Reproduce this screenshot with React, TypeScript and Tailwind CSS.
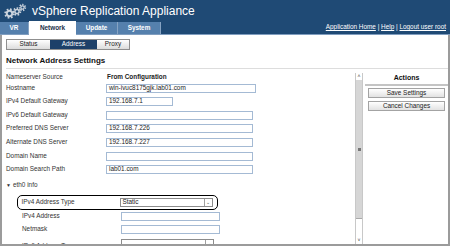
import React from "react";

const BLUE = "bg-[#1f4a75]";

function Gear({ cx, cy, r }: { cx: number; cy: number; r: number }) {
  const c = 2 * Math.PI * r;
  const teeth = r > 4 ? 8 : 7;
  const seg = c / teeth / 2;
  return (
    <g>
      <circle
        cx={cx}
        cy={cy}
        r={r}
        fill="none"
        stroke="#c9d2dc"
        strokeWidth={1.8}
        strokeDasharray={`${seg} ${seg}`}
      />
      <circle cx={cx} cy={cy} r={r - 0.6} fill="#c9d2dc" />
      <circle cx={cx} cy={cy} r={r * 0.38} fill="#1f4a75" />
    </g>
  );
}

function Logo() {
  return (
    <svg width="24" height="16" viewBox="0 0 24 16" className="shrink-0">
      <Gear cx={6.5} cy={10.5} r={4.3} />
      <Gear cx={14} cy={8.5} r={3.4} />
      <Gear cx={19.5} cy={4.5} r={2.8} />
    </svg>
  );
}

function Input({ w, value }: { w: number; value?: string }) {
  return (
    <div
      className="h-[9px] border border-[#a4bad4] bg-white px-[2px] flex items-center text-[6.4px] text-[#222] leading-none"
      style={{ width: w }}
    >
      {value}
    </div>
  );
}

function Select({ value }: { value: string }) {
  return (
    <div className="h-[9px] w-[93px] border border-[#8c8c8c] bg-white flex items-center text-[6.4px] text-[#222] leading-none">
      <span className="flex-1 px-[2px]">{value}</span>
      <span className="w-[8px] h-full border-l border-[#a0a0a0] flex items-center justify-center text-[5px] text-[#444]">
        ⌄
      </span>
    </div>
  );
}

const rows = [
  { label: "Hostname", w: 150, value: "win-ivuc8175gjk.lab01.com", mt: "mt-[2px]" },
  { label: "IPv4 Default Gateway", w: 67, value: "192.168.7.1", mt: "mt-[4px]" },
  { label: "IPv6 Default Gateway", w: 147, value: "", mt: "mt-[5px]" },
  { label: "Preferred DNS Server", w: 147, value: "192.168.7.226", mt: "mt-[4px]" },
  { label: "Alternate DNS Server", w: 147, value: "192.168.7.227", mt: "mt-[5px]" },
  { label: "Domain Name", w: 147, value: "", mt: "mt-[5px]" },
  { label: "Domain Search Path", w: 147, value: "lab01.com", mt: "mt-[4px]" },
];

export default function App() {
  return (
    <div className="w-[450px] h-[246px] overflow-hidden bg-white flex flex-col font-['Liberation_Sans',Arial,sans-serif]">
      {/* Header */}
      <div className={`h-[21px] ${BLUE} flex items-center pl-[3px] pt-[1px]`}>
        <Logo />
        <span className="ml-[5px] text-white text-[12px] leading-none">
          vSphere Replication Appliance
        </span>
      </div>

      {/* Main tabs */}
      <div className={`h-[14px] ${BLUE} flex items-end border-b border-[#7f9dbf]`}>
        <div className="h-[12px] w-[29px] bg-[#5580ad] border-r border-[#86a3c3] flex items-center justify-center text-white text-[6.4px] font-bold">
          VR
        </div>
        <div className="h-[14px] w-[47px] -mb-px bg-white flex items-center justify-center text-[#1b2f48] text-[6.4px] font-bold">
          Network
        </div>
        <div className="h-[12px] w-[42px] bg-[#5580ad] border-r border-[#86a3c3] flex items-center justify-center text-white text-[6.4px] font-bold">
          Update
        </div>
        <div className="h-[12px] w-[43px] bg-[#5580ad] border-r border-[#86a3c3] flex items-center justify-center text-white text-[6.4px] font-bold">
          System
        </div>
        <div className="ml-auto mr-[4px] self-center text-white text-[6.4px] leading-none">
          <span className="underline">Application Home</span> |{" "}
          <span className="underline">Help</span> |{" "}
          <span className="underline">Logout user root</span>
        </div>
      </div>

      {/* Body */}
      <div className="flex-1 min-h-0 border-x-2 border-b-2 border-[#9b9b9b] flex flex-col overflow-hidden">
        {/* Sub tabs */}
        <div className="mt-[4px] ml-[4px] flex h-[11px] w-[124px] border border-[#8f8f8f] text-[6.4px] leading-none">
          <div className="w-[43px] bg-gradient-to-b from-white to-[#dcdcdc] flex items-center justify-center text-[#222]">
            Status
          </div>
          <div className="w-[47px] bg-[#1d4069] flex items-center justify-center text-white">
            Address
          </div>
          <div className="flex-1 bg-gradient-to-b from-white to-[#dcdcdc] flex items-center justify-center text-[#222]">
            Proxy
          </div>
        </div>

        <h1 className="mt-[6px] ml-[4px] text-[8px] font-bold text-[#111] leading-[9px]">
          Network Address Settings
        </h1>
        <div className="mt-[3px] ml-[4px] border-t border-[#dddddd]" />

        <div className="flex flex-1 min-h-0">
          {/* Form */}
          <div className="flex-1 pl-[4px] text-[6.4px] text-[#333] leading-none">
            <div className="mt-[4px] h-[9px] flex items-center">
              <span className="w-[100px]">Nameserver Source</span>
              <span className="font-bold text-[#222] pl-[1px]">From Configuration</span>
            </div>
            {rows.map((r) => (
              <div key={r.label} className={`${r.mt} h-[9px] flex items-center`}>
                <span className="w-[100px]">{r.label}</span>
                <Input w={r.w} value={r.value} />
              </div>
            ))}

            <div className="mt-[7px] h-[9px] flex items-center text-[#333]">
              <span className="text-[5px] mr-[2px]">▼</span>
              <span>eth0 info</span>
            </div>

            <div className="ml-[11px] w-[201px] mt-[5px] h-[15px] border-[1.5px] border-black rounded-[5px] flex items-center pl-[3.5px]">
              <span className="w-[98px]">IPv4 Address Type</span>
              <Select value="Static" />
            </div>

            <div className="ml-[16px] mt-[2px] h-[9px] flex items-center">
              <span className="w-[99px]">IPv4 Address</span>
              <Input w={99} />
            </div>
            <div className="ml-[16px] mt-[4px] h-[9px] flex items-center">
              <span className="w-[99px]">Netmask</span>
              <Input w={99} />
            </div>
            <div className="ml-[16px] mt-[5px] h-[9px] flex items-start">
              <span className="w-[99px] pt-[4px]">IPv6 Address Type</span>
              <Select value="" />
            </div>
          </div>

          {/* Scrollbar */}
          <div className="w-[8px] mt-[4px] border-x border-[#c8c8c8] flex flex-col">
            <div className="h-[7px] flex items-center justify-center text-[5px] text-[#333] leading-none">
              ˄
            </div>
            <div className="h-[139px] bg-[#d6d6d6] border-b border-[#a9a9a9] flex items-center justify-center">
              <div className="w-[3px] h-[3px] bg-[#777]" />
            </div>
            <div className="flex-1 bg-white" />
            <div className="h-[6px] flex items-start justify-center text-[5px] text-[#333] leading-none">
              ˅
            </div>
          </div>

          {/* Actions */}
          <div className="w-[83px] ml-[2px] flex flex-col">
            <div className="mt-[5px] h-[8px] text-center text-[7px] font-bold text-[#111] leading-[8px]">
              Actions
            </div>
            <div className="mt-[2px] border-t-2 border-[#c4c4c4]" />
            <div className="mt-[2px] mx-[3px] h-[10px] border border-[#a3a3a3] bg-gradient-to-b from-white to-[#e2e2e2] flex items-center justify-center text-[6.4px] text-[#222] leading-none">
              Save Settings
            </div>
            <div className="mt-[3px] mx-[3px] h-[10px] border border-[#a3a3a3] bg-gradient-to-b from-white to-[#e2e2e2] flex items-center justify-center text-[6.4px] text-[#222] leading-none">
              Cancel Changes
            </div>
          </div>
        </div>
      </div>
    </div>
  );
}
